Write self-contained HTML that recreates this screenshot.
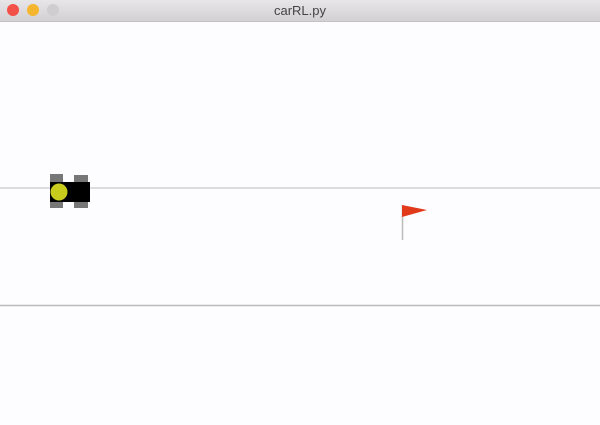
<!DOCTYPE html>
<html><head><style>
html,body{margin:0;padding:0;width:600px;height:425px;overflow:hidden;background:#fdfcfe;font-family:"Liberation Sans",sans-serif}
.bar{position:absolute;left:0;top:0;width:600px;height:21px;background:linear-gradient(#e8e6e8,#d3d1d3);border-bottom:1px solid #c4c2c4}
.dot{position:absolute;top:4px;width:12px;height:12px;border-radius:50%}
.t{position:absolute;top:3px;width:600px;text-align:center;font-size:13px;color:#444}
</style></head><body>
<div class="bar">
<div class="dot" style="left:7px;background:#f4504a"></div>
<div class="dot" style="left:27px;background:#f5b52e"></div>
<div class="dot" style="left:47px;background:#cfcdcf"></div>
<div class="t">carRL.py</div>
</div>
<svg width="600" height="425" style="position:absolute;left:0;top:0">
<line x1="0" y1="188" x2="600" y2="188" stroke="#bbb" stroke-width="1"/>
<line x1="0" y1="305.5" x2="600" y2="305.5" stroke="#bbb" stroke-width="1.5"/>
<rect x="50" y="174" width="13" height="34" fill="#777"/>
<rect x="74" y="175" width="14" height="33" fill="#777"/>
<rect x="50" y="182" width="40" height="20" fill="#000"/>
<circle cx="59" cy="192" r="8.5" fill="#c8cc1c"/>
<line x1="402.5" y1="205" x2="402.5" y2="240" stroke="#bbb" stroke-width="1.5"/>
<polygon points="402,205 427,210 402,217" fill="#e13a1a"/>
</svg>
</body></html>
